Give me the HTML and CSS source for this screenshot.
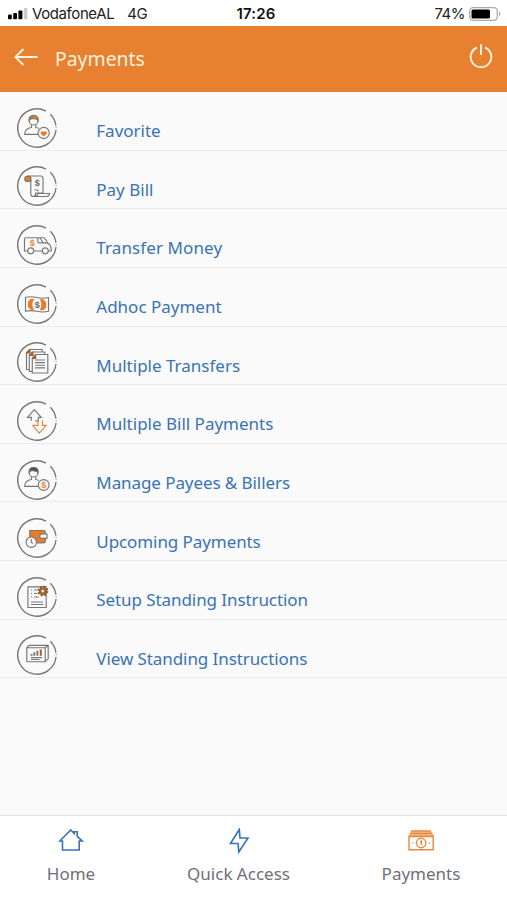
FILE: index.html
```html
<!DOCTYPE html>
<html lang="en">
<head>
<meta charset="utf-8">
<title>Payments</title>
<link rel="stylesheet" href="styles.css">
</head>
<body>
<svg class="defs" aria-hidden="true">
  <symbol id="ring" viewBox="0 0 40 40"><path d="M39 22A19.2 19.2 0 1 1 29 3.1M33.3 6.3A19.2 19.2 0 0 1 38.9 17.6" stroke-width="1.4"/><path d="M39.1 19v1.200" stroke-width=".8"/></symbol>
  <symbol id="person" viewBox="0 0 40 40"><circle cx="16.600" cy="12.500" r="4.500"/><path d="M14.500 16.500v3c-4 .5-6.800 2.200-6.800 6.800H21M18.800 16.500v3c1.200.2 2 .4 3 .9"/></symbol>
</svg>
<div class="app">
  <div class="status">
    <div class="carrier">
      <svg class="signal" viewBox="0 0 20 12"><rect x="0" y="6.500" width="3.800" height="4.700" rx="1"/><rect x="5.200" y="5" width="3.800" height="6.200" rx="1"/><rect x="10.400" y="2.500" width="4" height="8.700" rx="1"/><rect class="weak" x="15.800" y="0" width="3.600" height="11.200" rx="1"/></svg>
      <span class="name">VodafoneAL</span><span class="net">4G</span>
    </div>
    <div class="clock">17:26</div>
    <div class="power"><span>74%</span>
      <svg class="battery" viewBox="0 0 32 14"><rect class="case" x=".7" y=".7" width="27.600" height="12.600" rx="3.500"/><rect x="2.500" y="2.500" width="18.500" height="9" rx="1.500"/><path class="tip" d="M30 4.500q3 2.500 0 5z"/></svg>
    </div>
  </div>
  <header class="bar">
    <svg class="back" viewBox="0 0 24 18"><path d="M23.500 9H1.500M9.500 1L1.300 9l8.200 8"/></svg>
    <h1>Payments</h1>
    <svg class="off" viewBox="0 0 24 26"><path d="M8 4.500a10.300 10.300 0 1 0 8 0M12 1v11"/></svg>
  </header>
  <main>
    <div class="row"><svg class="ico" viewBox="0 0 40 40"><use href="#ring"/><use href="#person"/><path class="of" d="M12.200 12.500c-.5-3 1-5.200 4.400-5.200s5 2.200 4.400 5.200c-1-2-3.500-1.500-5-2.100-1.500 0-3 .3-3.800 2.100z"/><circle class="wf" cx="26.700" cy="25" r="5.600"/><path class="of ns" d="M26.700 28.500l-2.700-2.600c-1.600-1.900 1.200-4 2.700-1.900 1.500-2.100 4.300 0 2.700 1.900z"/></svg><span>Favorite</span></div>
    <div class="row"><svg class="ico" viewBox="0 0 40 40"><use href="#ring"/><path d="M10.500 10h13.500q2 0 2 2.500V27H18.500v1.500q0 2-2.200 2-2.500 0-2.500-2.500V12.500q0-2.500-2.800-2.500M18 30.500H29.500q2.800 0 3-3H21c-.2 2-1 3-3.500 3M17.300 24h3.500v1.500"/><path class="of" d="M13.700 15.500H9.800c-2.700 0-2.700-5.300 0-5.300q4-.2 3.900 3z"/><text class="dollar" x="20.300" y="20.300">$</text></svg><span>Pay Bill</span></div>
    <div class="row"><svg class="ico" viewBox="0 0 40 40"><use href="#ring"/><path d="M10.700 26H7.500V14q0-1.300 1.500-1.300H26c2.600.3 3.700 3 4.500 5.700 2.500.5 3.800 2 3.800 7.600h-3M16.700 26h8.600M20.800 12.700v4.100q0 1 1 1h8.500M23 13l3.200 4.800"/><circle cx="13.700" cy="25.800" r="3"/><circle cx="28.300" cy="25.800" r="3"/><text class="dollar od" x="15.200" y="20.700">$</text></svg><span class="wider">Transfer Money</span></div>
    <div class="row"><svg class="ico" viewBox="0 0 40 40"><use href="#ring"/><path d="M8.500 13.500q5-1.500 11.500 0t11.500 0v13.800q-5 1.300-11.500 0t-11.500 0z"/><path class="of ns" d="M13.200 14.800h4.600c-3 2-3.200 8.500-.2 11h-4.300q-.3-2.100-2.300-2.300v-6.300q2-.3 2.200-2.400zM26.800 15.300h-4.500c2.600 2.500 2.800 8 .2 11h4.300q.3-2.100 2.300-2.300v-6.300q-2-.3-2.300-2.400z"/><text class="dollar" x="20.200" y="23.500">$</text></svg><span>Adhoc Payment</span></div>
    <div class="row"><svg class="ico" viewBox="0 0 40 40"><use href="#ring"/><path class="wf" d="M9.500 10.500l3-3H25v20H9.500z"/><path class="wf" d="M12.300 13l3-3h12.500v19.300H12.300z"/><path class="wf" d="M15.300 16l3.500-3.500h12v18.500H15.300z"/><path d="M18 18h10M18 20.600h10M18 23.200h10M18 25.800h10"/><path class="brown" d="M10 11l3-3v3zM13 13.500l3-3v3zM15.700 16.500l3-3v3z"/></svg><span>Multiple Transfers</span></div>
    <div class="row"><svg class="ico" viewBox="0 0 40 40"><use href="#ring"/><path d="M14.300 19.800v-3.500h-3.800L17.300 8.500l7 7.800h-3v3.500h-3"/><path class="oline" d="M15.500 24.300l6.800 7.800 6.800-7.800h-3.600v-5M21 19v5.300h-5.500"/></svg><span>Multiple Bill Payments</span></div>
    <div class="row"><svg class="ico" viewBox="0 0 40 40"><use href="#ring"/><use href="#person"/><path class="df" d="M12.200 12.500c-.5-3 1-5.200 4.400-5.200s5 2.200 4.400 5.200c-1-1.500-3-1-5-2-1.500.5-3 .2-3.800 2z"/><circle class="wf" cx="26.700" cy="25" r="5.400"/><text class="dollar od" x="26.700" y="28.200">$</text></svg><span class="tight">Manage Payees &amp; Billers</span></div>
    <div class="row"><svg class="ico" viewBox="0 0 40 40"><use href="#ring"/><path class="of" d="M12.800 12.500h14q1.500 0 1.500 1.500v9.300q0 1.500-1.500 1.500h-12.500q-1.500 0-1.500-1.500z"/><path class="wf" d="M30 16h-4.500q-2.800 0-2.800 2.200t2.800 2.200H30z"/><circle class="wf" cx="14.300" cy="24.200" r="5.200"/><path d="M14.300 21v3.500l1.800 1"/></svg><span class="tight">Upcoming Payments</span></div>
    <div class="row"><svg class="ico" viewBox="0 0 40 40"><use href="#ring"/><path d="M10.900 9.800h18.300v20.700H10.900zM17 13h3M17 16.500h3M17 20h5M14 25h12M14 27.500h12"/><path stroke-dasharray="1 1" d="M14 13h2M14 16.500h2M14 20h2"/><circle class="gear" cx="25.800" cy="14" r="4.500"/><circle class="hub" cx="25.800" cy="14" r="3.300"/><circle class="wf ns" cx="25.800" cy="14" r="1.200"/></svg><span class="tight">Setup Standing Instruction</span></div>
    <div class="row"><svg class="ico" viewBox="0 0 40 40"><use href="#ring"/><path d="M9.800 12.700h18.400v14H9.800zM9.800 12.700l2.500-2.400h18.900v13.500l-3 2.900M28.200 12.700l3-2.400M14 22.600h11M14 24.500h8.500"/><path stroke-width="1.900" d="M14.500 20.800v-1.800M17.300 20.800v-3.500M20.400 20.800v-5"/><path class="brown" stroke-width="2" d="M23.800 20.800v-6.300"/></svg><span class="tight">View Standing Instructions</span></div>
  </main>
  <nav>
    <div class="tab home"><svg viewBox="0 0 26 26"><path d="M4.500 13H1.800L12.800 2l3.400 3.500V3.800h3v4.500l5 4.700h-3v9H4.500z"/></svg><span>Home</span></div>
    <div class="tab quick"><svg viewBox="0 0 26 26"><path d="M13.300 1.500L4.500 15.500h7.500l.8 8.500L22 10h-8z"/></svg><span>Quick Access</span></div>
    <div class="tab pay"><svg viewBox="0 0 26 26"><path class="fill" d="M3.500 2.200h19.200l3 5.500H.5z"/><path class="gap" d="M2 4.200h22M1.500 6.700h23"/><path d="M1 8.500h24.200v13.300H1z"/><circle cx="13.100" cy="15" r="4.700"/><path d="M12.200 13.800l1.200-.8v4M4.400 15h1M20.800 15h1"/></svg><span>Payments</span></div>
  </nav>
</div>
</body>
</html>
```
FILE: styles.css
```css
* { box-sizing: border-box; }
body { margin: 0; background: #fafafa; font-family: "Noto Sans", "Open Sans", sans-serif; }
.defs { position: absolute; width: 0; height: 0; }
.app { width: 507px; height: 900px; display: flex; flex-direction: column; overflow: hidden; }
svg { display: block; flex: none; }

.status { height: 25.500px; display: grid; grid-template-columns: 1fr auto 1fr; align-items: center; padding: 2px 6px 0 8px; background: #fff; color: #222; font: 15px/20px Inter, sans-serif; }
.carrier, .power { display: flex; align-items: center; }
.power { justify-content: flex-end; gap: 4px; letter-spacing: -.5px; }
.signal { width: 20px; height: 12px; }
.signal .weak { fill: #ccc; }
.name { margin-left: 4px; letter-spacing: -.4px; }
.net { margin-left: 13px; letter-spacing: -.4px; }
.clock { padding-left: 3px; font-weight: 600; letter-spacing: .2px; color: #111; }
.battery { width: 32px; height: 14px; }
.case { fill: #fff; stroke: #aaa; stroke-width: 1.300; }
.tip { fill: #aaa; }

.bar { height: 66.500px; flex: none; display: flex; align-items: center; padding: 0 13px 0 14px; background: #e88031; }
.bar svg { fill: none; stroke: #fff2df; stroke-width: 1.900; }
.back { width: 24px; height: 18px; margin-top: -4px; }
.off { width: 24px; height: 26px; margin: -6px 1px 0 auto; }
h1 { margin: 1px 0 0 17px; font-size: 19.400px; line-height: 26px; font-weight: 400; color: #fff2df; }

main { flex: 1; }
.row { height: 58.650px; display: flex; align-items: flex-start; padding: 15.700px 0 0 17.300px; border-bottom: 1px solid #ededef; }
.ico { width: 40px; height: 40px; fill: none; stroke: #777; stroke-width: 1.150; }
.row span { margin: 11.500px 0 0 39px; font-size: 17px; line-height: 24px; color: #3973b5; white-space: nowrap; }
.row .tight { letter-spacing: -.08px; }
.row .wider { letter-spacing: .1px; }
.of { fill: #e87b25; }
.df { fill: #4b4b4b; }
.wf { fill: #fafafa; }
.ns { stroke: none; }
.oline { stroke: #e98736; }
.brown { stroke: #a3622b; fill: #a3622b; }
.gear { stroke: #8b5b2e; stroke-width: 2; stroke-dasharray: 2 1.530; }
.hub { fill: #b66c28; stroke: #8b5b2e; }
.dollar { font: 700 9px "Liberation Sans", sans-serif; text-anchor: middle; fill: #666; stroke: none; }
.dollar.od { fill: #e98736; }

nav { height: 85px; flex: none; display: grid; grid-template-columns: 142px 193px 172px; border-top: 1px solid #e4e4e4; background: #fff; }
.tab { display: flex; flex-direction: column; align-items: center; padding-top: 12px; color: #6d7078; font-size: 17px; line-height: 24px; }
.tab svg { width: 26px; height: 26px; margin-bottom: 8px; fill: none; stroke: #3973b5; stroke-width: 1.600; }
.tab.pay svg { stroke: #e6893d; stroke-width: 1.400; }
.tab .fill { fill: #e6893d; stroke: none; }
.tab .gap { stroke: #fbe3cf; stroke-width: .6; }
```
